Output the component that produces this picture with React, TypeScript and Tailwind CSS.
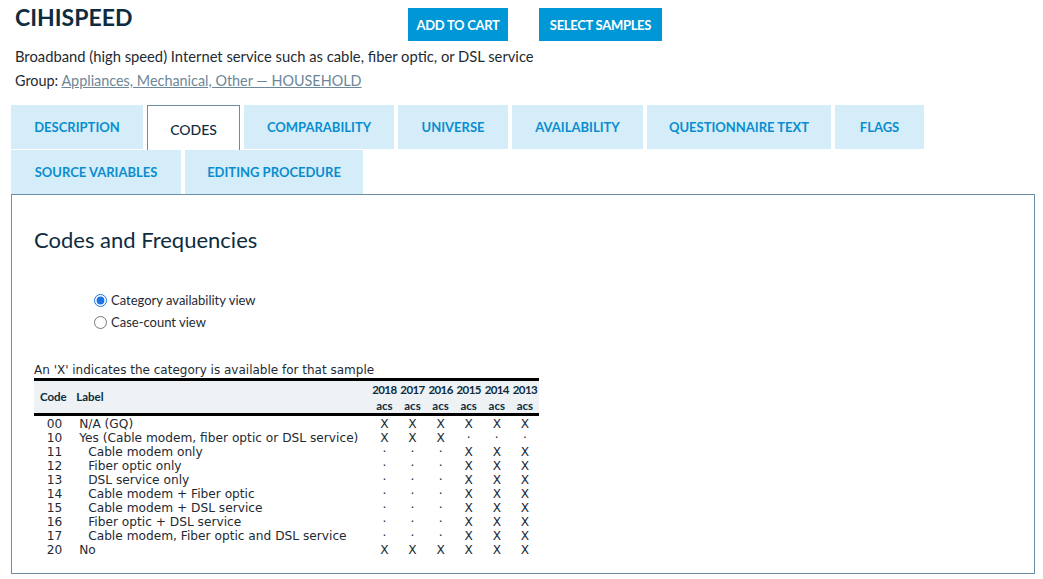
import React from "react";

const tabsRow1 = [
  { label: "DESCRIPTION", w: "w-[132px]" },
  { label: "CODES", w: "w-[93px]", active: true },
  { label: "COMPARABILITY", w: "w-[150px]" },
  { label: "UNIVERSE", w: "w-[110px]" },
  { label: "AVAILABILITY", w: "w-[131px]" },
  { label: "QUESTIONNAIRE TEXT", w: "w-[184px]" },
  { label: "FLAGS", w: "w-[89px]" },
];

const tabsRow2 = [
  { label: "SOURCE VARIABLES", w: "w-[170px]" },
  { label: "EDITING PROCEDURE", w: "w-[178px]" },
];

const years = ["2018", "2017", "2016", "2015", "2014", "2013"];

const rows: { code: string; label: string; indent?: boolean; marks: string }[] = [
  { code: "00", label: "N/A (GQ)", marks: "XXXXXX" },
  { code: "10", label: "Yes (Cable modem, fiber optic or DSL service)", marks: "XXX..." },
  { code: "11", label: "Cable modem only", indent: true, marks: "...XXX" },
  { code: "12", label: "Fiber optic only", indent: true, marks: "...XXX" },
  { code: "13", label: "DSL service only", indent: true, marks: "...XXX" },
  { code: "14", label: "Cable modem + Fiber optic", indent: true, marks: "...XXX" },
  { code: "15", label: "Cable modem + DSL service", indent: true, marks: "...XXX" },
  { code: "16", label: "Fiber optic + DSL service", indent: true, marks: "...XXX" },
  { code: "17", label: "Cable modem, Fiber optic and DSL service", indent: true, marks: "...XXX" },
  { code: "20", label: "No", marks: "XXXXXX" },
];

function Tab({ label, w, active }: { label: string; w: string; active?: boolean }) {
  if (active) {
    return (
      <div className={`${w} h-[45px] flex items-center justify-center pt-[2px] bg-white border border-b-0 border-[#6c8ea3] text-[14px] font-medium text-[#0d2c40] relative z-10`}>
        {label}
      </div>
    );
  }
  return (
    <div className={`${w} h-[44px] flex items-center justify-center pt-[2px] bg-[#d4edf8] text-[13px] font-bold text-[#0a8dd0]`}>
      {label}
    </div>
  );
}

export default function App() {
  return (
    <div className="w-[1043px] h-[579px] bg-white overflow-hidden font-['Lato',sans-serif] text-[#1e2a33]">
      {/* Header */}
      <div className="flex items-start pl-[15px] pt-[3px]">
        <h1 className="text-[23px] font-bold text-[#0d2c40] leading-[28px] w-[393px]">CIHISPEED</h1>
        <div className="flex gap-[31px] pt-[5px]">
          <button className="w-[100px] h-[33px] pt-[2px] bg-[#0097d7] text-white text-[13px] tracking-[-0.3px] font-bold">ADD TO CART</button>
          <button className="w-[123px] h-[33px] pt-[2px] bg-[#0097d7] text-white text-[13px] tracking-[-0.3px] font-bold">SELECT SAMPLES</button>
        </div>
      </div>
      <p className="pl-[15px] mt-[5px] text-[14.75px] leading-[20px]">
        Broadband (high speed) Internet service such as cable, fiber optic, or DSL service
      </p>
      <p className="pl-[15px] mt-[5px] text-[14.4px] leading-[20px]">
        Group: <span className="underline text-[#6d8799]">Appliances, Mechanical, Other — HOUSEHOLD</span>
      </p>

      {/* Tabs */}
      <div className="pl-[11px] mt-[14px]">
        <div className="flex gap-1 items-start h-[45px]">
          {tabsRow1.map((t) => (
            <Tab key={t.label} {...t} />
          ))}
        </div>
        <div className="flex gap-1 relative z-20">
          {tabsRow2.map((t) => (
            <Tab key={t.label} {...t} />
          ))}
        </div>
      </div>

      {/* Content */}
      <div className="ml-[11px] w-[1024px] h-[380px] border border-[#6c8ea3] pl-[22px] pt-[31px]">
        <h2 className="text-[22px] leading-[28px] text-[#0d2c40]">Codes and Frequencies</h2>
        <div className="ml-[60px] mt-[35px] text-[13px] leading-[22px]">
          <label className="flex items-center gap-[4px]">
            <input type="radio" name="view" defaultChecked className="w-[13px] h-[13px] m-0 accent-[#1a73e8]" />
            Category availability view
          </label>
          <label className="flex items-center gap-[4px]">
            <input type="radio" name="view" className="w-[13px] h-[13px] m-0" />
            Case-count view
          </label>
        </div>
        <p className="mt-[29px] text-[12px] leading-[16px] font-['DejaVu_Sans',sans-serif] text-[#1e2a33]">
          An 'X' indicates the category is available for that sample
        </p>

        <table className="w-[505px] border-collapse text-[12.2px] font-['DejaVu_Sans',sans-serif] text-[#1e2a33]">
          <thead className="bg-[#eef2f5] font-['Lato',sans-serif] font-bold text-[11.5px] text-[#0d2c40]">
            <tr className="border-t-[3px] border-black">
              <th rowSpan={2} className="w-[41px] p-0 pl-[6px] text-left align-middle">Code</th>
              <th rowSpan={2} className="w-[294px] p-0 pl-[1px] text-left align-middle">Label</th>
              {years.map((y) => (
                <th key={y} className="w-[28px] p-0 text-center text-[11.5px] tracking-[-0.6px] leading-[16px] pt-[1px]">{y}</th>
              ))}
            </tr>
            <tr className="border-b-[3px] border-black">
              {years.map((y) => (
                <th key={y} className="p-0 text-center leading-[15px]">acs</th>
              ))}
            </tr>
          </thead>
          <tbody>
            <tr><td className="h-[2px] p-0" colSpan={8}></td></tr>
            {rows.map((r) => (
              <tr key={r.code}>
                <td className="p-0 h-[14px] leading-[14px] text-center">{r.code}</td>
                <td className={`p-0 h-[14px] leading-[14px] ${r.indent ? "pl-[13px]" : "pl-[4px]"}`}>{r.label}</td>
                {r.marks.split("").map((m, i) => (
                  <td key={i} className="p-0 h-[14px] leading-[14px] text-center">
                    {m === "X" ? "X" : "·"}
                  </td>
                ))}
              </tr>
            ))}
          </tbody>
        </table>
      </div>
    </div>
  );
}
